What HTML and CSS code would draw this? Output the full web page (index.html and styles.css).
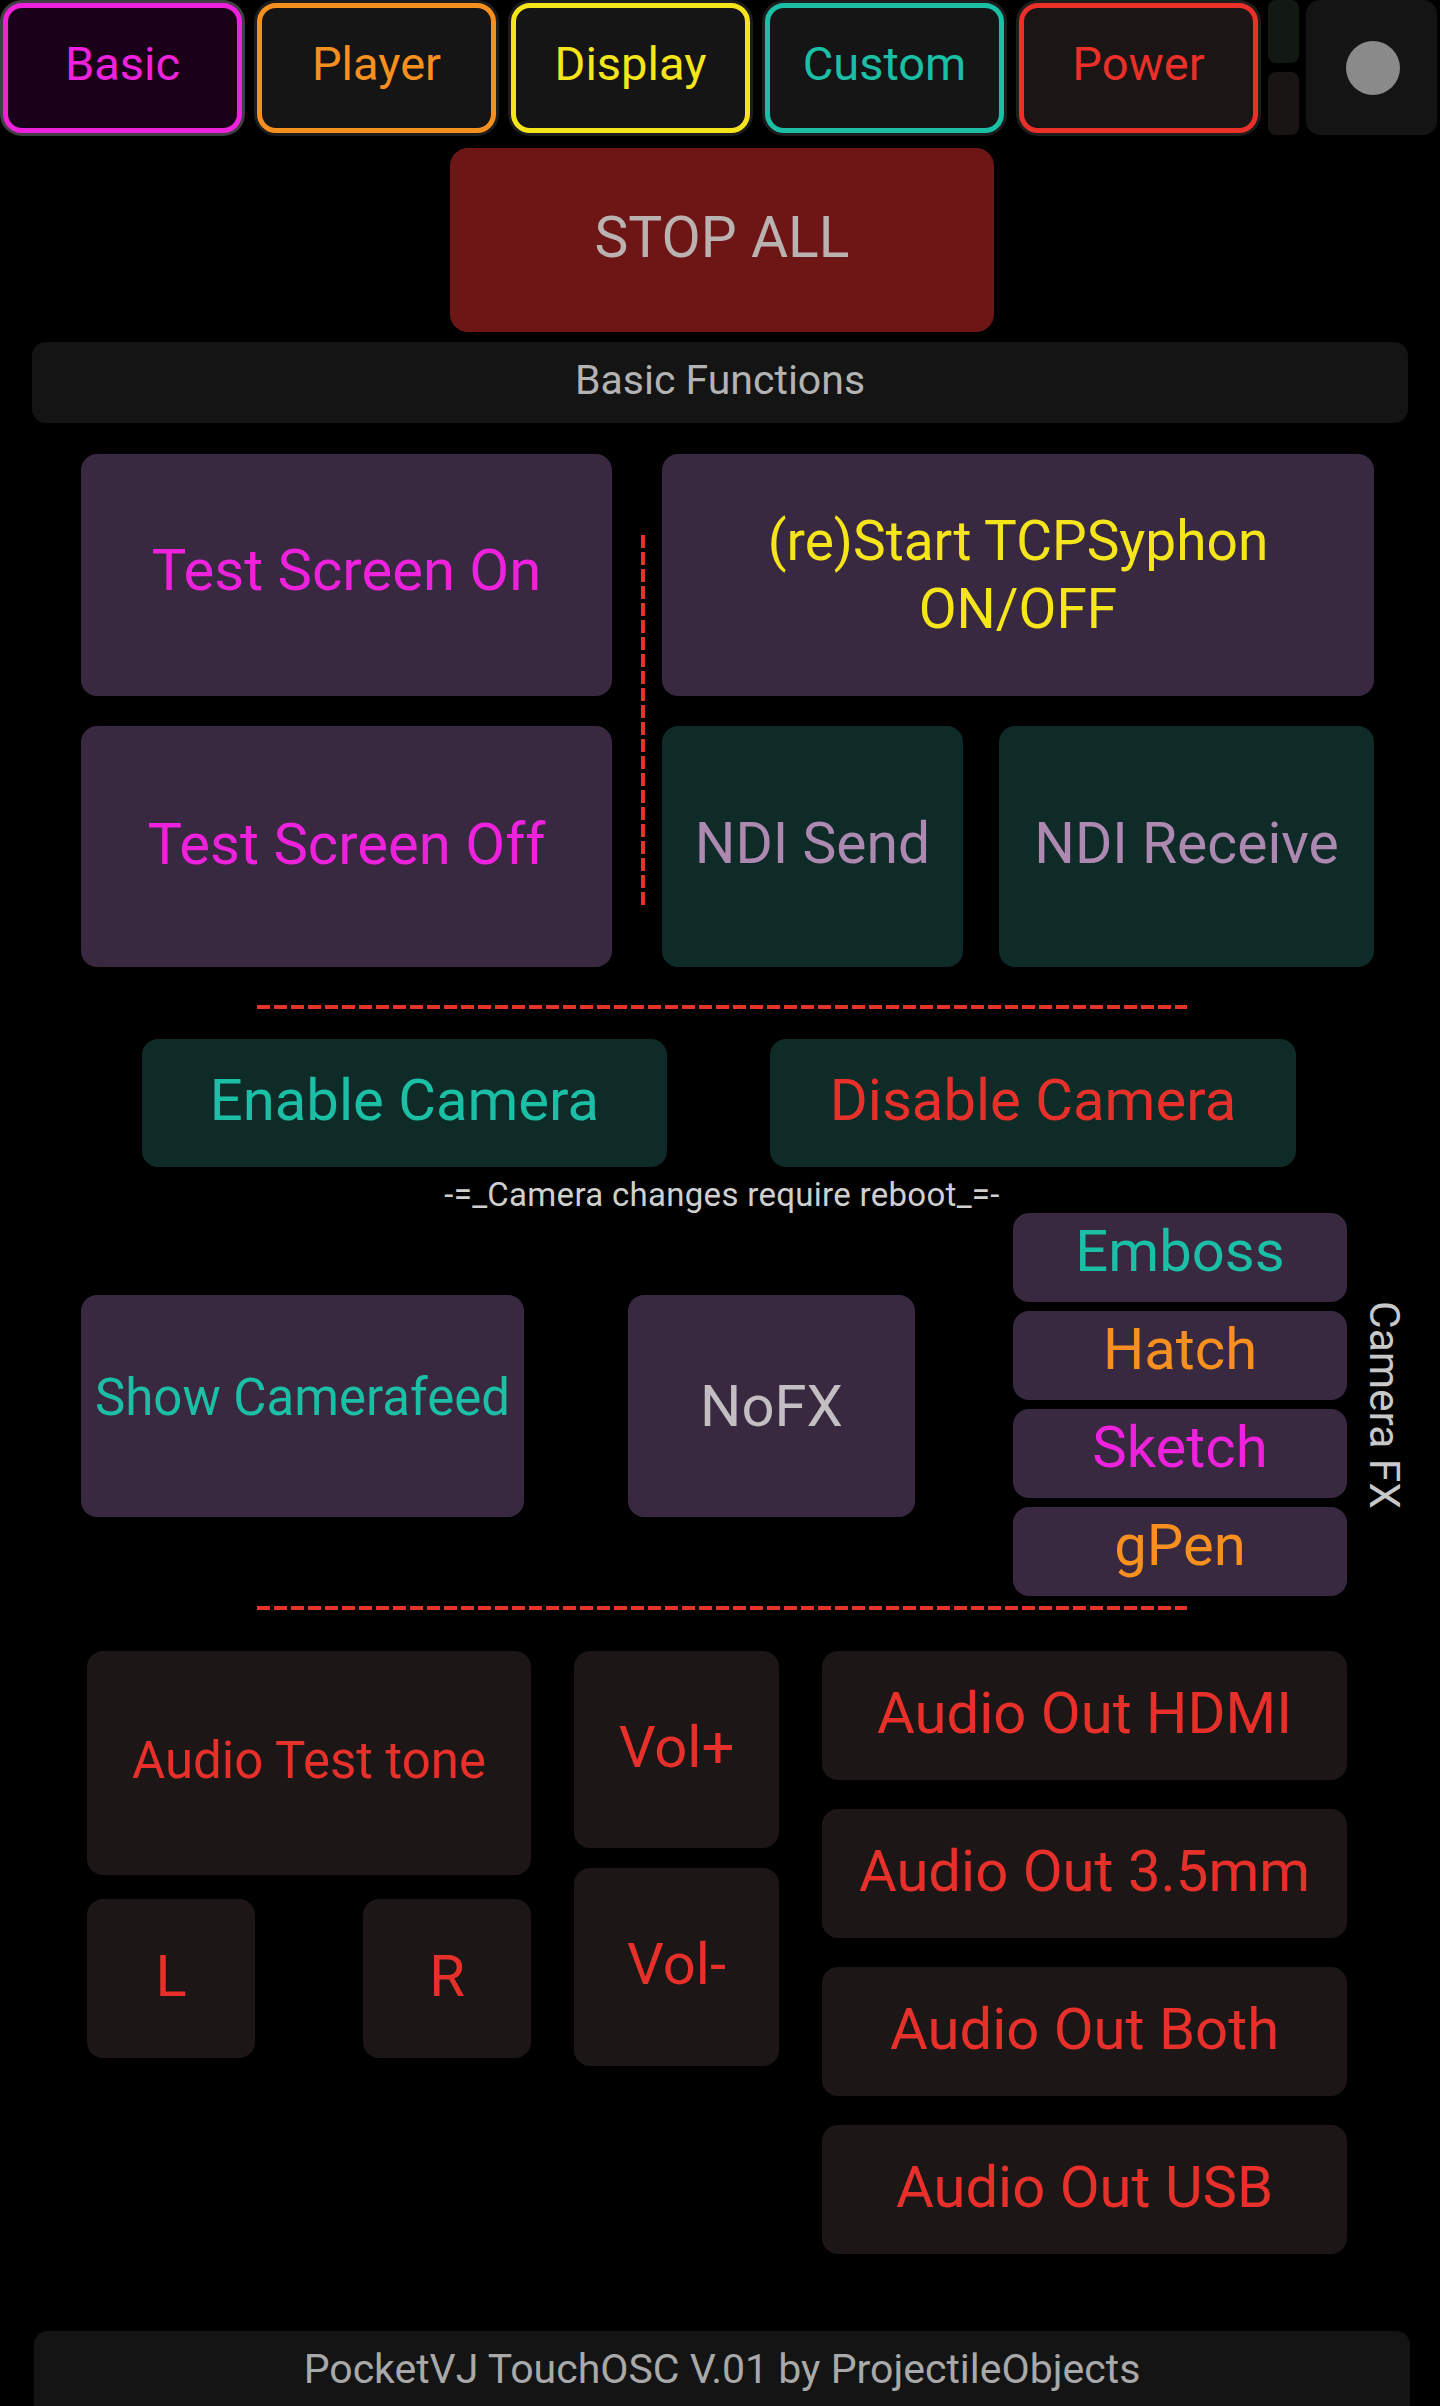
FILE: index.html
```html
<!DOCTYPE html>
<html lang="en">
<head>
<meta charset="utf-8">
<title>PocketVJ TouchOSC</title>
<link rel="stylesheet" href="styles.css">
</head>
<body>
<div class="page">
  <div class="tabs">
    <div class="tab tab-basic">Basic</div>
    <div class="tab tab-player">Player</div>
    <div class="tab tab-display">Display</div>
    <div class="tab tab-custom">Custom</div>
    <div class="tab tab-power">Power</div>
    <div class="bars">
      <div class="bar bar-top"></div>
      <div class="bar bar-bottom"></div>
    </div>
    <div class="record"><div class="dot"></div></div>
  </div>

  <div class="stop">STOP ALL</div>

  <div class="section-title">Basic Functions</div>

  <div class="grid-basic">
    <div class="btn purple magenta ts-on">Test Screen On</div>
    <div class="vdash"></div>
    <div class="btn purple yellow tcp">(re)Start TCPSyphon<br>ON/OFF</div>
    <div class="btn purple magenta ts-off">Test Screen Off</div>
    <div class="btn teal-bg mauve ndi-send">NDI Send</div>
    <div class="btn teal-bg mauve ndi-recv">NDI Receive</div>
  </div>

  <div class="hdash hdash-1"></div>

  <div class="cam-row">
    <div class="btn teal-bg teal cam-btn">Enable Camera</div>
    <div class="btn teal-bg red cam-btn cam-disable">Disable Camera</div>
  </div>

  <div class="note">-=_Camera changes require reboot_=-</div>

  <div class="cam-fx">
    <div class="btn purple teal feed">Show Camerafeed</div>
    <div class="btn purple grey nofx">NoFX</div>
    <div class="fx-col">
      <div class="btn purple teal fx">Emboss</div>
      <div class="btn purple orange fx">Hatch</div>
      <div class="btn purple magenta fx">Sketch</div>
      <div class="btn purple orange fx">gPen</div>
    </div>
    <div class="fx-label">Camera FX</div>
  </div>

  <div class="hdash hdash-2"></div>

  <div class="audio">
    <div class="audio-left">
      <div class="btn dark red test-tone">Audio Test tone</div>
      <div class="lr">
        <div class="btn dark red lr-btn">L</div>
        <div class="btn dark red lr-btn">R</div>
      </div>
    </div>
    <div class="vol-col">
      <div class="btn dark red vol-up">Vol+</div>
      <div class="btn dark red vol-down">Vol-</div>
    </div>
    <div class="out-col">
      <div class="btn dark red out">Audio Out HDMI</div>
      <div class="btn dark red out">Audio Out 3.5mm</div>
      <div class="btn dark red out">Audio Out Both</div>
      <div class="btn dark red out">Audio Out USB</div>
    </div>
  </div>

  <div class="footer">PocketVJ TouchOSC V.01 by ProjectileObjects</div>
</div>
</body>
</html>
```

FILE: styles.css
```css
html, body {
  margin: 0;
  padding: 0;
  background: #000;
}
body {
  font-family: Roboto, "Liberation Sans", Arial, sans-serif;
  width: 1440px;
  height: 2406px;
  overflow: hidden;
}
.page {
  width: 1440px;
  display: flex;
  flex-direction: column;
  align-items: flex-start;
}

/* Tabs */
.tabs {
  display: flex;
  align-items: flex-start;
  height: 135px;
  padding-left: 3px;
}
.tab {
  box-sizing: border-box;
  width: 239px;
  height: 130px;
  margin-top: 3px;
  margin-right: 15px;
  border: 5px solid;
  border-radius: 19px;
  display: flex;
  align-items: center;
  justify-content: center;
  font-size: 47px;
  padding-bottom: 10px;
  background: #151515;
  box-shadow: 0 0 0 3px #1d1d1d;
}
.tab-basic { color: #ee22dd; border-color: #ee22dd; background: #1a0019; box-shadow: 0 0 0 3px #404040; }
.tab-player { color: #f7901e; border-color: #f7901e; }
.tab-display { color: #f6e51a; border-color: #f6e51a; }
.tab-custom { color: #1bbfa6; border-color: #1bbfa6; }
.tab-power { color: #ea3028; border-color: #ea3028; background: #1b1515; margin-right: 10px; }
.bars {
  display: flex;
  flex-direction: column;
  gap: 9px;
  width: 31px;
  margin-right: 7px;
}
.bar {
  height: 63px;
  border-radius: 8px;
}
.bar-top { background: #121812; }
.bar-bottom { background: #1a1515; }
.record {
  width: 131px;
  height: 135px;
  background: #141414;
  border-radius: 14px;
  display: flex;
  align-items: center;
  justify-content: center;
}
.dot {
  width: 54px;
  height: 54px;
  border-radius: 50%;
  background: #8a8a8a;
  margin-left: 3px;
}

/* STOP ALL */
.stop {
  box-sizing: border-box;
  margin-top: 13px;
  margin-left: 450px;
  width: 544px;
  height: 184px;
  background: #6e1616;
  border-radius: 18px;
  color: #bab1b1;
  font-size: 57px;
  padding-bottom: 5px;
  display: flex;
  align-items: center;
  justify-content: center;
}

.section-title {
  box-sizing: border-box;
  margin-top: 10px;
  margin-left: 32px;
  width: 1376px;
  height: 81px;
  background: #141414;
  border-radius: 14px;
  color: #b3b3b3;
  font-size: 41px;
  padding-bottom: 5px;
  display: flex;
  align-items: center;
  justify-content: center;
}

/* Generic buttons */
.btn {
  box-sizing: border-box;
  border-radius: 16px;
  display: flex;
  align-items: center;
  justify-content: center;
  text-align: center;
  font-size: 58px;
  padding-bottom: 6px;
}
.purple { background: #382840; }
.teal-bg { background: #0f2b28; }
.dark { background: #1c1617; }
.magenta { color: #ee22dd; }
.yellow { color: #f6e51a; }
.mauve { color: #ad88b0; }
.teal { color: #1bbfa6; }
.red { color: #e8302a; }
.orange { color: #f7901e; }
.grey { color: #c2bec2; }

/* Basic grid */
.grid-basic {
  margin-top: 31px;
  margin-left: 81px;
  display: grid;
  grid-template-columns: 531px 50px 301px 36px 375px;
  grid-template-rows: 242px 241px;
  row-gap: 30px;
}
.ts-on { grid-column: 1; grid-row: 1; padding-bottom: 10px; }
.ts-off { grid-column: 1; grid-row: 2; }
.tcp { grid-column: 3 / 6; grid-row: 1; line-height: 68px; font-size: 55px; padding-bottom: 0; }
.ndi-send { grid-column: 3; grid-row: 2; font-size: 57px; }
.ndi-recv { grid-column: 5; grid-row: 2; font-size: 57px; }
.vdash {
  grid-column: 2;
  grid-row: 1 / 3;
  width: 4px;
  height: 370px;
  margin-top: 81px;
  margin-left: 29px;
  background: repeating-linear-gradient(to bottom, #e5332a 0 13px, transparent 13px 17px);
}

.hdash {
  margin-left: 257px;
  width: 930px;
  height: 4px;
  background: repeating-linear-gradient(to right, #e5332a 0 13px, transparent 13px 17px);
}
.hdash-1 { margin-top: 38px; }
.hdash-2 { margin-top: 10px; }

/* Camera */
.cam-row {
  margin-top: 30px;
  margin-left: 142px;
  display: flex;
}
.cam-btn {
  width: 525px;
  height: 128px;
}
.cam-disable {
  margin-left: 103px;
  width: 526px;
}
.note {
  margin-top: 10px;
  width: 1444px;
  height: 36px;
  line-height: 36px;
  text-align: center;
  font-size: 33px;
  letter-spacing: 0.3px;
  color: #cfcfcf;
}

.cam-fx {
  margin-left: 81px;
  display: flex;
  align-items: flex-start;
}
.feed {
  width: 443px;
  height: 222px;
  margin-top: 82px;
  font-size: 51px;
  padding-bottom: 18px;
}
.nofx {
  width: 287px;
  height: 222px;
  margin-top: 82px;
  margin-left: 104px;
  padding-bottom: 0;
}
.fx-col {
  margin-left: 98px;
  width: 334px;
  display: flex;
  flex-direction: column;
  gap: 9px;
}
.fx {
  height: 89px;
  padding-bottom: 14px;
}
.fx-label {
  margin-left: 21px;
  margin-top: 88px;
  writing-mode: vertical-rl;
  font-size: 42.5px;
  line-height: 32px;
  color: #c8c8c8;
}

/* Audio */
.audio {
  margin-top: 41px;
  margin-left: 87px;
  display: flex;
  align-items: flex-start;
}
.audio-left {
  width: 444px;
  display: flex;
  flex-direction: column;
  gap: 24px;
}
.test-tone {
  height: 224px;
  font-size: 51px;
}
.lr {
  display: flex;
  justify-content: space-between;
}
.lr-btn {
  width: 168px;
  height: 159px;
}
.vol-col {
  margin-left: 43px;
  width: 205px;
  display: flex;
  flex-direction: column;
  gap: 20px;
}
.vol-up { height: 197px; }
.vol-down { height: 198px; }
.out-col {
  margin-left: 43px;
  width: 525px;
  display: flex;
  flex-direction: column;
  gap: 29px;
}
.out { height: 129px; }

.footer {
  margin-top: 77px;
  margin-left: 34px;
  width: 1376px;
  height: 80px;
  background: #141414;
  border-radius: 14px 14px 0 0;
  color: #a9a9a9;
  font-size: 41px;
  display: flex;
  align-items: center;
  justify-content: center;
  padding-bottom: 4px;
  box-sizing: border-box;
}
```
